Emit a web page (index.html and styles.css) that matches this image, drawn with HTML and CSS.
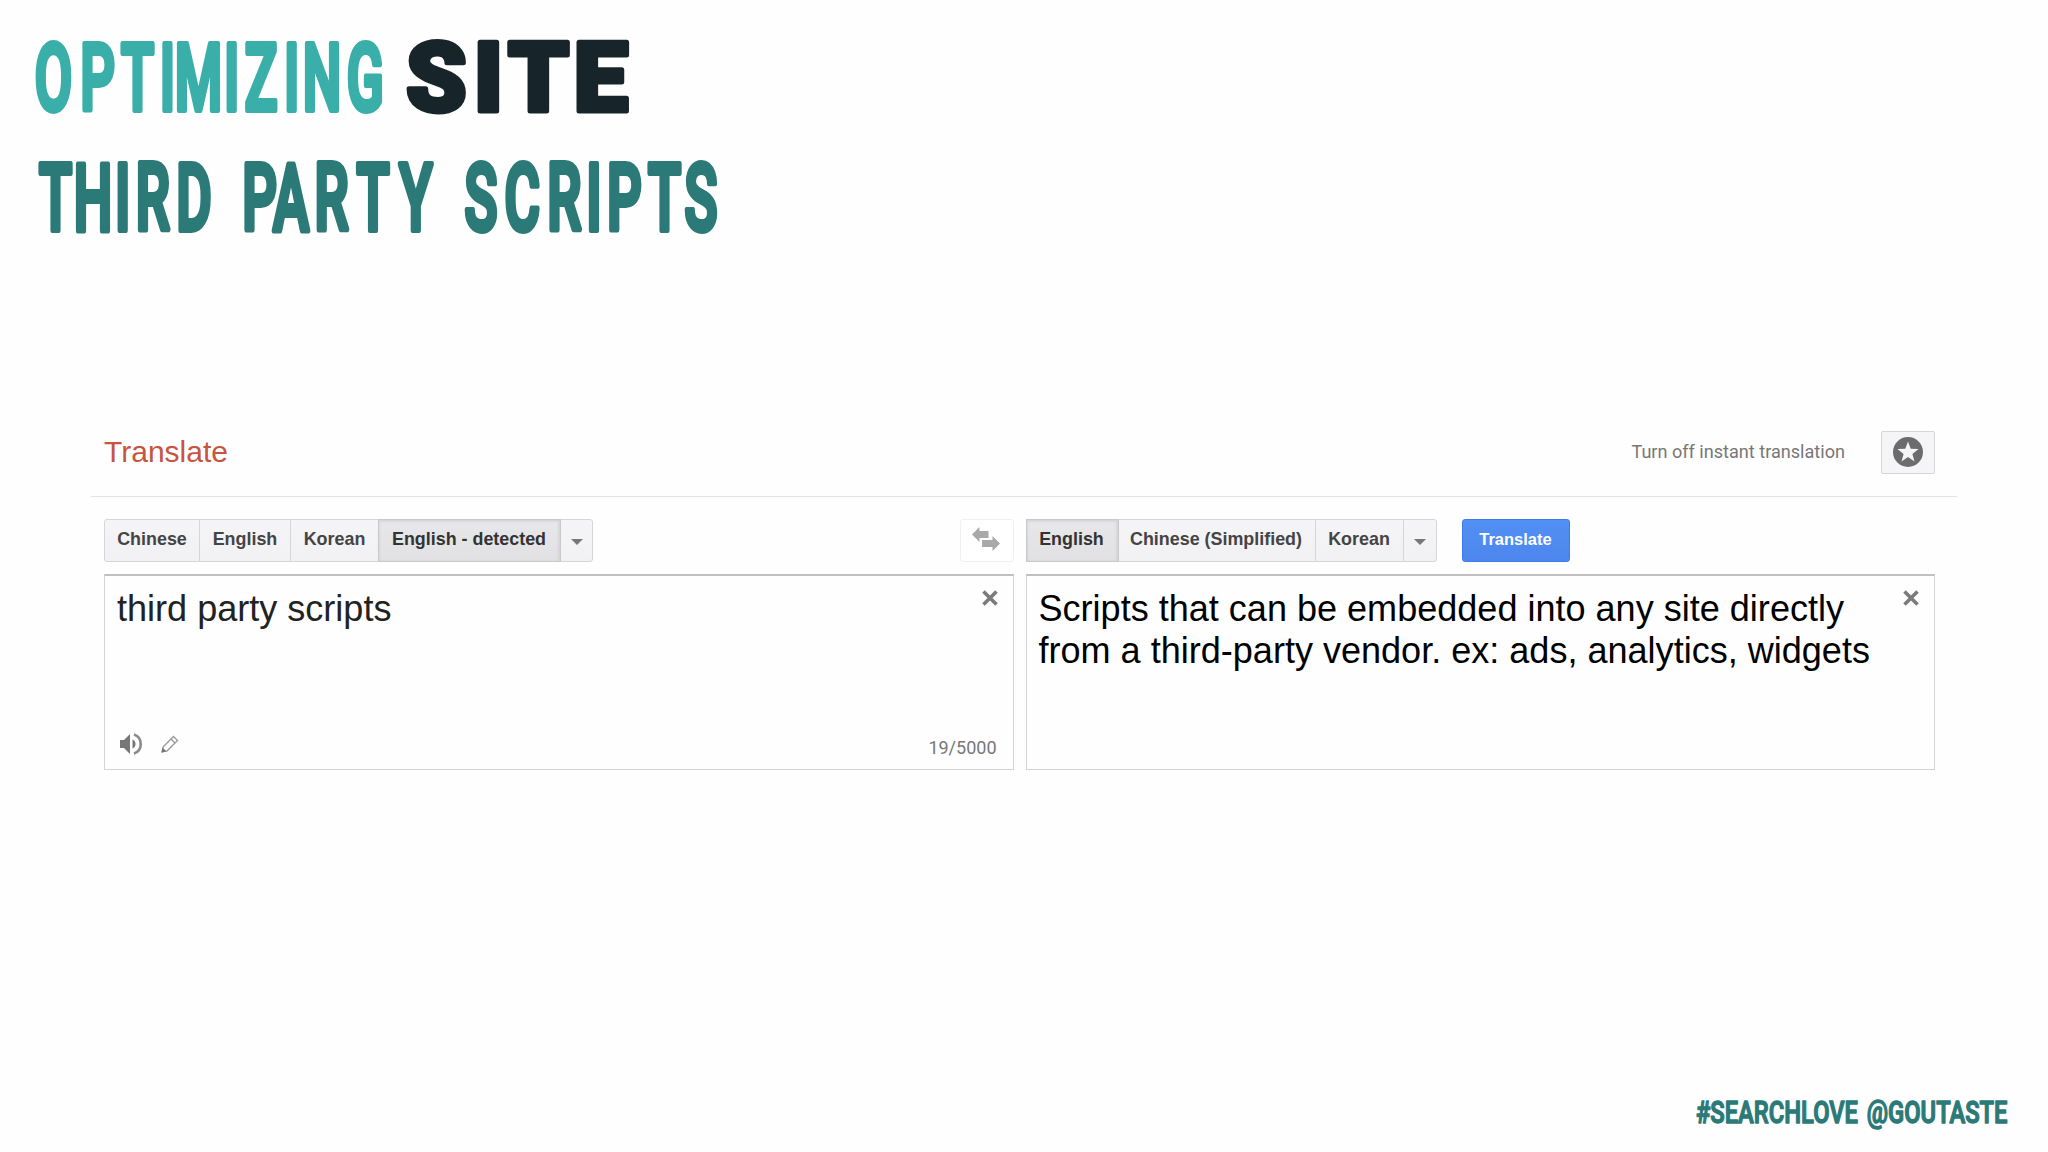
FILE: index.html
```
<!DOCTYPE html>
<html lang="en">

<head>
  <meta charset="UTF-8" />
  <meta name="viewport" content="width=device-width, initial-scale=1.0" />
  <title>Optimizing Site - Third Party Scripts</title>
  <link rel="stylesheet" href="styles.css">
</head>

<body>
  <header class="slide-title">
    <svg width="760" height="260" viewBox="0 0 760 260">
      <text class="tall light" transform="translate(0 109.5) scale(.59 1)" x="90.7 165.5 233 283.7 336.6 392.7 442.4 494.6 545.8 619.2">OPTIMIZING</text>
      <text class="heavy" y="111" x="436.4 488.5 538.5 601">SITE</text>
      <text class="tall dark" transform="translate(0 229.5) scale(.59 1)" x="94.3 157.6 208.1 259.2 328.8 383 440 493.1 562 632.2 704.8 762 815.3 885.3 956.5 1006.8 1058.3 1126.5 1188">THIRD PARTY SCRIPTS</text>
    </svg>
  </header>

  <main class="translator">
    <div class="top-bar">
      <h1>Translate</h1>
      <span class="instant">Turn off instant translation</span>
      <button class="star-btn">
        <svg width="30" height="30" viewBox="0 0 30 30">
          <circle cx="15" cy="15" r="15" fill="#6c6b6d" />
          <path d="M15 4.5l2.7 7.3 7.8.3-6.1 4.8 2.1 7.5-6.5-4.3-6.5 4.3 2.1-7.5-6.1-4.8 7.8-.3z" fill="#f5f4f6" />
        </svg>
      </button>
    </div>

    <div class="panes">
      <section class="pane">
        <div class="toolbar">
          <div class="langs">
            <button class="w-chinese">Chinese</button>
            <button class="w-english">English</button>
            <button class="w-korean">Korean</button>
            <button class="w-detected active">English - detected</button>
            <button class="more"><i class="caret"></i></button>
          </div>
          <button class="swap-btn">
            <svg width="28" height="24" viewBox="0 0 28 24">
              <path d="M0 7.5L7.5 0v4h9v7h-9v4zM28 16.5L20.5 9v4H10v7h10.5v4z" fill="#aaa9aa" />
            </svg>
          </button>
        </div>
        <div class="box">
          <p class="source">third party scripts</p>
          <svg class="close" width="16" height="16" viewBox="0 0 16 16">
            <path d="M1.5 1.5l13 13M14.5 1.5l-13 13" />
          </svg>
          <div class="box-footer">
            <svg width="24" height="24" viewBox="0 0 24 24">
              <path d="M1 8h4l6-6v20l-6-6H1z" fill="#777" />
              <path d="M13.5 7.5c4 1 4 8 0 9z" fill="#777" />
              <path d="M15 2.5c9 3 9 16 0 19" fill="none" stroke="#8b8b8b" stroke-width="2.6" />
            </svg>
            <svg width="20" height="20" viewBox="0 0 20 20">
              <path d="M2 18l1.2-5.2L13.5 2.5l4 4L7.2 16.8zM11 5l4 4" fill="none" stroke="#999" stroke-width="1.3" />
              <path d="M1.5 18.5l1-5 4 4z" fill="#777" />
            </svg>
            <span class="count">19/5000</span>
          </div>
        </div>
      </section>

      <section class="pane">
        <div class="toolbar">
          <div class="langs">
            <button class="w-target active">English</button>
            <button class="w-simplified">Chinese (Simplified)</button>
            <button class="w-korean">Korean</button>
            <button class="more"><i class="caret"></i></button>
          </div>
          <button class="translate-btn">Translate</button>
        </div>
        <div class="box">
          <p class="result">Scripts that can be embedded into any site directly<br>from a third-party vendor. ex: ads, analytics, widgets</p>
          <svg class="close" width="16" height="16" viewBox="0 0 16 16">
            <path d="M1.5 1.5l13 13M14.5 1.5l-13 13" />
          </svg>
        </div>
      </section>
    </div>
  </main>

  <footer class="handle">
    <svg width="330" height="44" viewBox="0 0 330 44">
      <text transform="translate(3 32) scale(.742 1)">#SEARCHLOVE @GOUTASTE</text>
    </svg>
  </footer>
</body>

</html>
```
FILE: styles.css
```
* {
  box-sizing: border-box;
}

body {
  margin: 0;
  height: 1152px;
  display: flex;
  flex-direction: column;
  background: #fefefe;
  font-family: "Liberation Sans", Arial, sans-serif;
  overflow: hidden;
}

svg {
  display: block;
}

button {
  font-family: inherit;
  padding: 0;
}

/* slide headings */
.slide-title {
  height: 420px;
}

.slide-title text {
  font-family: Roboto, sans-serif;
  text-anchor: middle;
  stroke-linejoin: round;
}

.tall {
  font-size: 92px;
  font-weight: 500;
  stroke-width: 6px;
}

.light {
  fill: #3aafa9;
  stroke: #3aafa9;
}

.dark {
  fill: #2b7a78;
  stroke: #2b7a78;
}

.heavy {
  font-size: 97px;
  font-weight: 900;
  fill: #17252a;
  stroke: #17252a;
  stroke-width: 5px;
}

/* translate widget */
.translator {
  width: 1866px;
  margin-left: 91px;
}

.top-bar {
  height: 77px;
  padding: 11px 22px 0 13px;
  display: flex;
  align-items: flex-start;
  border-bottom: 1px solid #e4e1e7;
}

h1 {
  margin: 4px auto 0 0;
  font-size: 30px;
  line-height: 34px;
  font-weight: normal;
  color: #c8543f;
}

.instant {
  margin: 10px 36px 0 0;
  font-family: Roboto, sans-serif;
  font-size: 18.1px;
  line-height: 22px;
  color: #777;
}

.star-btn {
  width: 54px;
  height: 43px;
  display: flex;
  align-items: center;
  justify-content: center;
  padding-bottom: 1px;
  background: #f5f4f6;
  border: 1px solid #d6d5d8;
  border-radius: 2px;
}

.panes {
  display: flex;
  gap: 12px;
  padding: 22px 22px 0 13px;
}

.pane {
  flex: 1;
}

.toolbar {
  display: flex;
  height: 43px;
  margin-bottom: 12px;
}

.langs {
  display: flex;
  border: 1px solid #d6d5d8;
  border-radius: 3px;
  background: linear-gradient(#f5f4f6, #f1f0f2);
}

.langs button {
  border: none;
  border-right: 1px solid #d6d5d8;
  background: none;
  font-size: 17.9px;
  font-weight: bold;
  color: #444;
  padding-bottom: 2px;
}

.langs .more {
  width: 32px;
  border-right: none;
  display: flex;
  align-items: center;
  justify-content: center;
  padding: 3px 0 0 1px;
}

.caret {
  border: 6px solid transparent;
  border-top-color: #777;
  border-bottom: none;
}

.langs .active {
  color: #333;
  background: linear-gradient(#e8e8ea, #e1e1e3);
  box-shadow: 0 0 0 1px #c9c8cb, inset 0 1px 3px rgba(0, 0, 0, .12);
}

.w-chinese {
  width: 95px;
}

.w-english {
  width: 91px;
}

.w-korean {
  width: 88px;
}

.w-detected {
  width: 181px;
}

.w-target {
  width: 91px;
}

.w-simplified {
  width: 198px;
}

.swap-btn {
  width: 54px;
  margin-left: auto;
  display: flex;
  align-items: center;
  justify-content: center;
  padding: 0 2px 3px 0;
  background: #fff;
  border: 1px solid #f1eff3;
  border-radius: 3px;
}

.translate-btn {
  width: 108px;
  margin-left: 25px;
  padding-bottom: 2px;
  border: 1px solid #4079ea;
  border-radius: 3px;
  background: linear-gradient(#5290f5, #4d86ec);
  color: #fff;
  font-size: 16.5px;
  font-weight: bold;
}

.box {
  position: relative;
  height: 196px;
  padding: 12px;
  border: 1px solid #d4d3d6;
  border-top: 2px solid #c0c0c1;
}

.box p {
  margin: 0;
  font-size: 36.05px;
  line-height: 42px;
  white-space: nowrap;
}

.source {
  color: #222;
}

.result {
  color: #000;
}

.close {
  position: absolute;
  top: 14px;
  right: 15px;
  fill: none;
  stroke: #7b7b7b;
  stroke-width: 3.6;
}

.box-footer {
  position: absolute;
  left: 14px;
  right: 16px;
  bottom: 11px;
  display: flex;
  gap: 17px;
  align-items: center;
}

.count {
  margin: 9px 0 0 auto;
  font-family: Roboto, sans-serif;
  font-size: 18px;
  line-height: 20px;
  color: #777;
}

.handle {
  margin: auto 25px 17px auto;
}

.handle text {
  font-family: Roboto, sans-serif;
  font-size: 32px;
  font-weight: 500;
  word-spacing: 4px;
  fill: #2b7a78;
  stroke: #2b7a78;
  stroke-width: 1.5px;
  stroke-linejoin: round;
}
```
